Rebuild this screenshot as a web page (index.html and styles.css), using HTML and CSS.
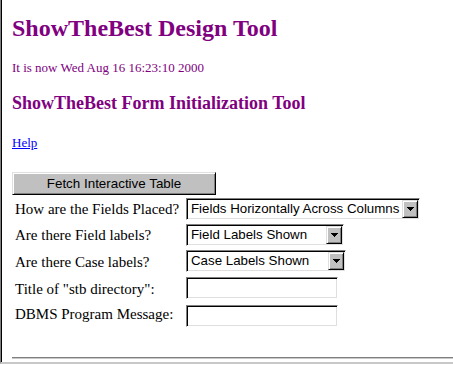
FILE: index.html
```html
<!DOCTYPE html>
<html>
<head>
<meta charset="utf-8">
<title>ShowTheBest Design Tool</title>
<link rel="stylesheet" href="styles.css">
</head>
<body>
<div class="frame">
  <h1 class="title">ShowTheBest Design Tool</h1>
  <p class="date">It is now Wed Aug 16 16:23:10 2000</p>
  <h3 class="subtitle">ShowTheBest Form Initialization Tool</h3>
  <p class="help"><a href="#" class="help-link">Help</a></p>
  <button class="btn" type="button">Fetch Interactive Table</button>
  <div class="form">
    <span class="label">How are the Fields Placed?</span>
    <div class="combo combo-wide">
      <select class="combo-select"><option>Fields Horizontally Across Columns</option></select>
      <span class="combo-btn"><svg width="7" height="4" viewBox="0 0 7 4" shape-rendering="crispEdges"><path d="M0 0h7v1H0zM1 1h5v1H1zM2 2h3v1H2zM3 3h1v1H3z" fill="#000"/></svg></span>
    </div>
    <span class="label">Are there Field labels?</span>
    <div class="combo combo-mid">
      <select class="combo-select"><option>Field Labels Shown</option></select>
      <span class="combo-btn"><svg width="7" height="4" viewBox="0 0 7 4" shape-rendering="crispEdges"><path d="M0 0h7v1H0zM1 1h5v1H1zM2 2h3v1H2zM3 3h1v1H3z" fill="#000"/></svg></span>
    </div>
    <span class="label">Are there Case labels?</span>
    <div class="combo combo-mid2">
      <select class="combo-select"><option>Case Labels Shown</option></select>
      <span class="combo-btn"><svg width="7" height="4" viewBox="0 0 7 4" shape-rendering="crispEdges"><path d="M0 0h7v1H0zM1 1h5v1H1zM2 2h3v1H2zM3 3h1v1H3z" fill="#000"/></svg></span>
    </div>
    <span class="label">Title of "stb directory":</span>
    <input class="field" type="text">
    <span class="label">DBMS Program Message:</span>
    <input class="field" type="text">
  </div>
  <hr class="rule">
</div>
</body>
</html>
```
FILE: styles.css
```css
html, body {
  margin: 0;
  padding: 0;
  background: #fff;
}
body {
  overflow: hidden;
  font-family: "Liberation Serif", "Times New Roman", serif;
}
.frame {
  box-sizing: border-box;
  height: 364px;
  border-left: 1px solid #808080;
  box-shadow: inset 1px 0 #000;
  border-bottom: 2px solid #c8c8c8;
  padding-left: 11px;
  display: flex;
  flex-direction: column;
  align-items: flex-start;
}
.title {
  margin: 14px 0 0;
  font-size: 24px;
  line-height: 28px;
  font-weight: bold;
  color: #800080;
}
.date {
  margin: 18px 0 0;
  font-size: 13px;
  line-height: 15px;
  color: #800080;
}
.subtitle {
  margin: 18px 0 0;
  font-size: 18px;
  line-height: 21px;
  font-weight: bold;
  color: #800080;
}
.help {
  margin: 21px 0 0;
  font-size: 13px;
  line-height: 15px;
}
.help-link {
  color: #0000ff;
  text-decoration: underline;
}
.btn {
  margin: 22px 0 0;
  box-sizing: border-box;
  width: 204px;
  height: 23px;
  padding: 0;
  background: #c0c0c0;
  border: 1px solid;
  border-color: #dfdfdf #000 #000 #dfdfdf;
  box-shadow: inset 1px 1px #fff, inset -1px -1px #808080;
  font-family: "Liberation Sans", Arial, sans-serif;
  font-size: 13.4px;
  color: #000;
}
.form {
  margin-top: 3px;
  display: grid;
  grid-template-columns: 174px auto;
  grid-template-rows: 26px 26px 27px 28px 22px;
  align-items: start;
}
.label {
  align-self: center;
  padding-left: 3px;
  font-size: 15px;
  line-height: 17px;
  margin-top: -3px;
  white-space: nowrap;
  color: #000;
}
.combo {
  box-sizing: border-box;
  height: 22px;
  display: flex;
  background: #fff;
  border: 1px solid;
  border-color: #808080 #fff #fff #808080;
  box-shadow: inset 1px 1px #000, inset -1px -1px #dfdfdf;
  padding: 1px;
}
.combo-wide { width: 234px; }
.combo-mid { width: 158px; }
.combo-mid2 { width: 160px; }
.combo-select {
  flex: 1;
  min-width: 0;
  appearance: none;
  -webkit-appearance: none;
  border: 0;
  outline: 0;
  background: transparent;
  padding: 0 0 1px 3px;
  margin: 0;
  font-family: "Liberation Sans", Arial, sans-serif;
  font-size: 13.3px;
  color: #000;
}
.combo-btn {
  box-sizing: border-box;
  width: 16px;
  display: flex;
  align-items: center;
  justify-content: center;
  background: #c0c0c0;
  border: 1px solid;
  border-color: #dfdfdf #000 #000 #dfdfdf;
  box-shadow: inset 1px 1px #fff, inset -1px -1px #808080;
}
.field {
  box-sizing: border-box;
  width: 152px;
  height: 22px;
  margin: 0;
  padding: 0 3px;
  background: #fff;
  border: 1px solid;
  border-color: #808080 #fff #fff #808080;
  box-shadow: inset 1px 1px #000, inset -1px -1px #dfdfdf;
  outline: 0;
  font-family: "Liberation Sans", Arial, sans-serif;
  font-size: 13.4px;
}
.rule {
  margin: auto 0 3px;
  align-self: stretch;
  height: 0;
  border: 0;
  border-top: 1px solid #808080;
  border-bottom: 1px solid #c8c8c8;
}
```
